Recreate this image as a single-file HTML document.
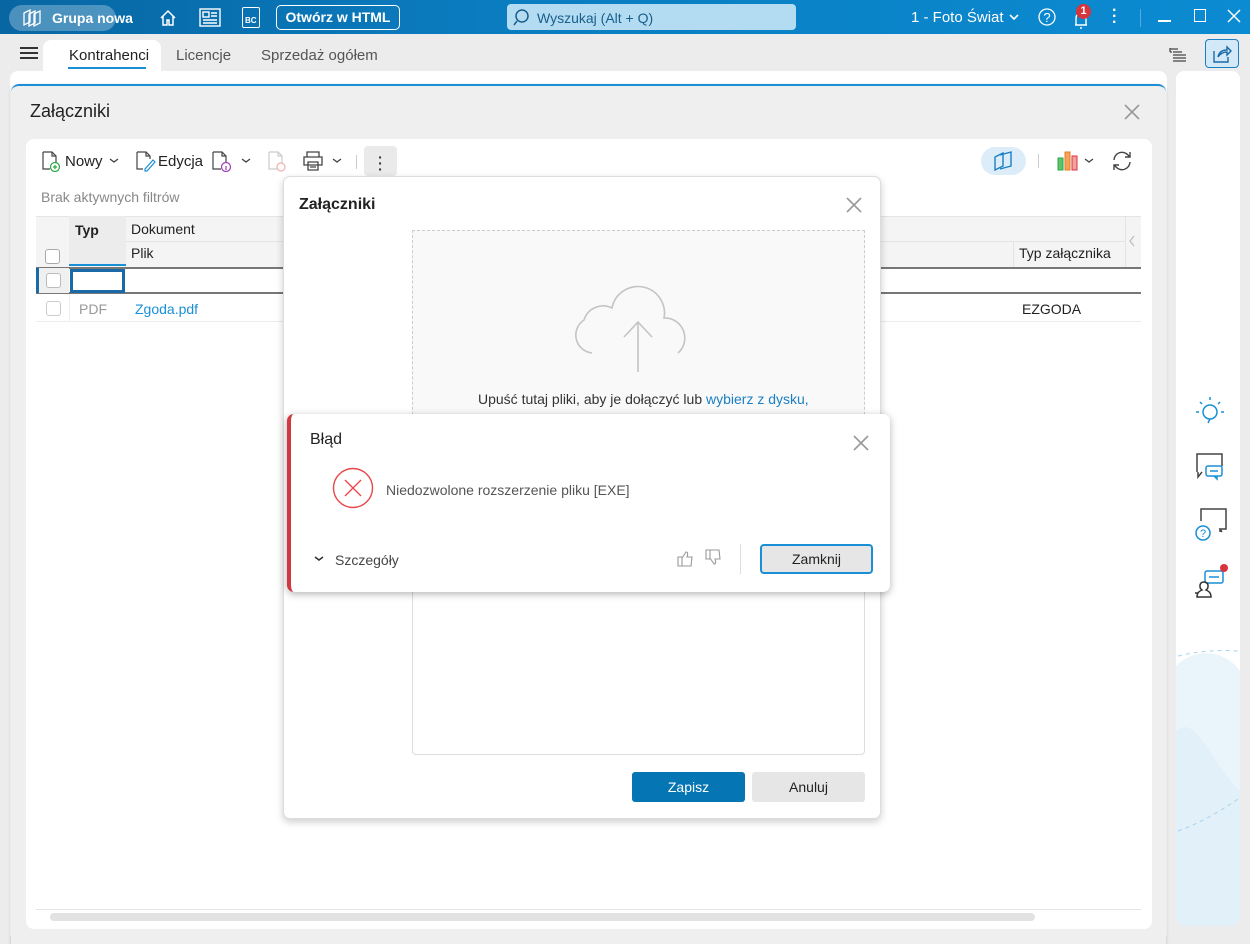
<!DOCTYPE html>
<html><head><meta charset="utf-8"><style>
*{box-sizing:border-box;margin:0;padding:0}
body{width:1250px;height:936px;overflow:hidden;background:#ececec;font-family:"Liberation Sans",sans-serif;position:relative;font-size:14px;color:#222}
.abs{position:absolute}
.top{left:0;top:0;width:1250px;height:34px;background:linear-gradient(90deg,#0866a3 0%,#0a7dc0 40%,#0b8bd2 100%)}
.t{position:absolute;white-space:nowrap}
</style></head><body>
<div class="abs" style="left:0;top:0;width:1250px;height:3px;background:#333"></div>
<div class="abs top"></div>
<div class="abs" style="left:9px;top:5px;width:107px;height:26px;border-radius:13px;background:rgba(255,255,255,.28)"></div>
<svg class="abs" style="left:20px;top:8px" width="24" height="20" viewBox="0 0 24 20" fill="none" stroke="#fff" stroke-width="1.3"><path d="M4 5l6-3v12l-6 3z M9 6l6-3v12l-6 3z M14 6l6-3v12l-6 3z"/></svg>
<div class="t" style="left:52px;top:10px;color:#fff;font-weight:bold;font-size:14px">Grupa nowa</div>
<svg class="abs" style="left:158px;top:8px" width="20" height="20" viewBox="0 0 20 20" fill="none" stroke="#fff" stroke-width="1.5"><path d="M3 10L10 3l7 7M5 8v9h4v-5h2v5h4V8"/></svg>
<svg class="abs" style="left:199px;top:8px" width="22" height="19" viewBox="0 0 22 19" fill="none" stroke="#fff" stroke-width="1.4"><rect x="1" y="1" width="20" height="17"/><rect x="4" y="4" width="6" height="5"/><path d="M12 5h6M12 8h6M4 12h14M4 15h14"/></svg>
<div class="abs" style="left:242px;top:7px;width:18px;height:21px;border:1.4px solid #fff;border-radius:2px;color:#fff;font-size:8px;font-weight:bold;padding:8px 0 0 2px">BC</div>
<div class="abs" style="left:276px;top:5px;width:124px;height:25px;border:1.5px solid #fff;border-radius:5px;color:#fff;font-weight:bold;font-size:14px;text-align:center;line-height:22px">Otwórz w HTML</div>
<div class="abs" style="left:507px;top:4px;width:289px;height:26px;border-radius:4px;background:#b3dcf2"></div>
<svg class="abs" style="left:512px;top:8px" width="20" height="20" viewBox="0 0 20 20" fill="none" stroke="#185f8c" stroke-width="1.5"><circle cx="10" cy="8" r="6"/><path d="M5 13l-3 4"/></svg>
<div class="t" style="left:537px;top:10px;color:#185f8c;font-size:14px">Wyszukaj (Alt + Q)</div>
<div class="t" style="left:911px;top:9px;color:#fff;font-size:15px">1 - Foto Świat</div>
<svg class="abs" style="left:1008px;top:13px" width="12" height="8"><path d="M2 2l4 4 4-4" stroke="#fff" stroke-width="1.6" fill="none"/></svg>
<svg class="abs" style="left:1037px;top:7px" width="20" height="20"><circle cx="10" cy="10" r="8" stroke="#fff" stroke-width="1.3" fill="none"/><text x="10" y="15" fill="#fff" font-size="13" text-anchor="middle" font-family="Liberation Sans">?</text></svg>
<svg class="abs" style="left:1071px;top:8px" width="20" height="22" fill="none" stroke="#fff" stroke-width="1.4"><path d="M4 17h12M5 17V10a5 5 0 0110 0v7M9 20h2"/></svg>
<div class="abs" style="left:1076px;top:4px;width:15px;height:15px;border-radius:50%;background:#d8343b;color:#fff;font-size:11px;font-weight:bold;text-align:center;line-height:15px">1</div>
<div class="t" style="left:1112px;top:8px;color:#fff;font-size:16px;font-weight:bold;line-height:6px">·<br>·<br>·</div>
<div class="abs" style="left:1140px;top:9px;width:1px;height:18px;background:rgba(255,255,255,.3)"></div>
<div class="abs" style="left:1158px;top:20px;width:13px;height:1.5px;background:#fff"></div>
<div class="abs" style="left:1194px;top:9px;width:12px;height:13px;border:1.5px solid #fff"></div>
<svg class="abs" style="left:1227px;top:9px" width="14" height="14"><path d="M1 1l12 12M13 1L1 13" stroke="#fff" stroke-width="1.5"/></svg>

<div class="abs" style="left:20px;top:47px;width:18px;height:2px;background:#333;box-shadow:0 5px #333,0 10px #333"></div>
<div class="abs" style="left:43px;top:40px;width:118px;height:32px;background:#fff;border-radius:8px 8px 0 0"></div>
<div class="t" style="left:69px;top:47px;font-size:15px;color:#222">Kontrahenci</div>
<div class="abs" style="left:68px;top:67px;width:78px;height:2px;background:#1a8fd6"></div>
<div class="t" style="left:176px;top:47px;font-size:15px;color:#555">Licencje</div>
<div class="t" style="left:261px;top:47px;font-size:15px;color:#555">Sprzedaż ogółem</div>
<svg class="abs" style="left:1168px;top:46px" width="20" height="18" fill="none" stroke="#444" stroke-width="1.2"><path d="M2 2v4M2 3h8M5 6h9M5 9h13M5 12h13M5 15h13M2 6h2"/></svg>
<div class="abs" style="left:1205px;top:39px;width:34px;height:29px;border:1.3px solid #1a7fc4;border-radius:4px;background:#d4e9f7"></div>
<svg class="abs" style="left:1211px;top:43px" width="22" height="22" fill="none" stroke="#1a6aa8" stroke-width="1.4"><path d="M3 8v11h14v-5M7 14c1-5 4-7 9-7V4l4 4-4 4V9c-4 0-7 2-9 5z"/></svg>

<div class="abs" style="left:10px;top:71px;width:1157px;height:870px;background:#fff;border-radius:8px"></div>
<div class="abs" style="left:11px;top:84px;width:1155px;height:860px;background:#efefef;border-top:2px solid #1a8fd6;border-radius:8px 8px 0 0;box-shadow:0 1px 3px rgba(0,0,0,.2)"></div>
<div class="t" style="left:30px;top:101px;font-size:18px;color:#222">Załączniki</div>
<svg class="abs" style="left:1124px;top:104px" width="16" height="16"><path d="M1 1l14 14M15 1L1 15" stroke="#999" stroke-width="1.6"/></svg>
<div class="abs" style="left:26px;top:139px;width:1126px;height:790px;background:#fff;border-radius:8px"></div>

<div class="abs" style="left:1176px;top:71px;width:64px;height:855px;background:#fff;border-radius:8px;overflow:hidden">
<svg width="64" height="855"><path d="M0 595 C20 575 50 580 64 600 L64 855 L0 855Z" fill="#eaf4fb"/><path d="M0 660 C20 640 40 700 64 720 L64 855 L0 855Z" fill="#e2f0f9"/><path d="M2 585 Q30 578 62 580" stroke="#a8d3ee" stroke-dasharray="4 4" fill="none"/><path d="M2 760 Q30 750 62 728" stroke="#a8d3ee" stroke-dasharray="4 4" fill="none"/></svg>
</div>
<svg class="abs" style="left:1193px;top:394px" width="34" height="34" fill="none" stroke="#1a8fd6" stroke-width="1.5"><circle cx="17" cy="18" r="7"/><path d="M17 25l-2 4M17 3v3M7 8l2 2M27 8l-2 2M3 18h3M28 18h3"/></svg>
<svg class="abs" style="left:1193px;top:450px" width="34" height="36" fill="none" stroke-width="1.5"><path d="M4 22V4h25v12M9 22l-4 5v-5" stroke="#444"/><rect x="13" y="16" width="16" height="10" rx="2" stroke="#1a8fd6" fill="#fff"/><path d="M17 21h8M24 26v3l-3-3" stroke="#1a8fd6"/></svg>
<svg class="abs" style="left:1193px;top:505px" width="34" height="36" fill="none" stroke-width="1.5"><path d="M8 16V4h25v20h-6l2 3M27 24v3" stroke="#444"/><circle cx="10" cy="28" r="7" stroke="#1a8fd6" fill="#fff"/><text x="10" y="32" font-size="11" fill="#1a8fd6" stroke="none" text-anchor="middle" font-family="Liberation Sans">?</text></svg>
<svg class="abs" style="left:1193px;top:563px" width="36" height="40" fill="none" stroke-width="1.5"><rect x="12" y="8" width="18" height="12" rx="2" stroke="#1a8fd6"/><path d="M16 14h10" stroke="#1a8fd6"/><path d="M4 34c0-5 3-6 5-7-3-2-3-8 2-8s5 6 2 8c2 1 5 2 5 7zM2 30h3" stroke="#333"/><circle cx="31" cy="5" r="4" fill="#d8343b" stroke="none"/></svg>

<svg class="abs" style="left:40px;top:150px" width="22" height="22" fill="none" stroke="#444" stroke-width="1.2"><path d="M3 2h9l4 4v7M3 2v17h7M12 2v4h4"/><circle cx="15" cy="17" r="4.5" stroke="#2aa84a"/><path d="M15 15v4M13 17h4" stroke="#2aa84a"/></svg>
<div class="t" style="left:65px;top:153px;font-size:15px">Nowy</div>
<svg class="abs" style="left:108px;top:157px" width="12" height="8"><path d="M2 2l4 3 4-3" stroke="#444" stroke-width="1.3" fill="none"/></svg>
<svg class="abs" style="left:134px;top:150px" width="22" height="22" fill="none" stroke="#444" stroke-width="1.2"><path d="M3 2h9l4 4v3M3 2v17h6M12 2v4h4"/><path d="M11 19l8-9 2 2-8 9h-2z" stroke="#1a8fd6"/></svg>
<div class="t" style="left:158px;top:153px;font-size:15px">Edycja</div>
<svg class="abs" style="left:210px;top:150px" width="24" height="22" fill="none" stroke="#444" stroke-width="1.2"><path d="M3 2h9l4 4v7M3 2v17h8M12 2v4h4"/><circle cx="16" cy="17" r="4.5" stroke="#9b3fb5"/><path d="M16 16v4" stroke="#9b3fb5"/></svg>
<svg class="abs" style="left:240px;top:157px" width="12" height="8"><path d="M2 2l4 3 4-3" stroke="#444" stroke-width="1.3" fill="none"/></svg>
<svg class="abs" style="left:266px;top:150px" width="24" height="22" fill="none" stroke="#ccc" stroke-width="1.2"><path d="M3 2h9l4 4v7M3 2v17h8M12 2v4h4"/><circle cx="15" cy="17" r="4" stroke="#f2b0b0"/></svg>
<svg class="abs" style="left:301px;top:150px" width="24" height="22" fill="none" stroke="#444" stroke-width="1.3"><path d="M6 7V2h12v5M3 7h18v8H3zM7 12h10v8H7zM9 15h6M9 17h6"/></svg>
<svg class="abs" style="left:331px;top:157px" width="12" height="8"><path d="M2 2l4 3 4-3" stroke="#444" stroke-width="1.3" fill="none"/></svg>
<div class="abs" style="left:356px;top:155px;width:1px;height:14px;background:#ccc"></div>
<div class="abs" style="left:364px;top:146px;width:33px;height:30px;background:#eaeaea;border-radius:4px;text-align:center;font-weight:bold;line-height:6px;padding-top:8px;color:#333">·<br>·<br>·</div>
<div class="abs" style="left:981px;top:147px;width:45px;height:28px;background:#dcedf9;border-radius:14px"></div>
<svg class="abs" style="left:992px;top:149px" width="24" height="24" fill="none" stroke="#1a7fc4" stroke-width="1.4"><path d="M3 8l8-4v13l-8 4zM8 6l11-3v14l-11 3"/></svg>
<div class="abs" style="left:1038px;top:154px;width:1px;height:14px;background:#ccc"></div>
<svg class="abs" style="left:1056px;top:150px" width="24" height="22"><rect x="2" y="8" width="5" height="12" fill="#5cc36b" stroke="#2aa84a"/><rect x="9" y="2" width="5" height="18" fill="#f5a35c" stroke="#e07d22"/><rect x="16" y="6" width="5" height="14" fill="#f3a0a0" stroke="#d8343b"/></svg>
<svg class="abs" style="left:1083px;top:157px" width="12" height="8"><path d="M2 2l4 3 4-3" stroke="#444" stroke-width="1.3" fill="none"/></svg>
<svg class="abs" style="left:1110px;top:149px" width="24" height="24" fill="none" stroke="#444" stroke-width="1.4"><path d="M4 11a8 8 0 0114-5l2 2M20 13a8 8 0 01-14 5l-2-2M20 3v5h-5M4 21v-5h5"/></svg>
<div class="t" style="left:41px;top:189px;font-size:14px;color:#888">Brak aktywnych filtrów</div>

<div class="abs" style="left:36px;top:216px;width:1105px;height:52px;background:#f4f4f4;border-top:1px solid #e4e4e4"></div>
<div class="abs" style="left:69px;top:216px;width:57px;height:50px;background:#ececec"></div>
<div class="abs" style="left:69px;top:264px;width:57px;height:2px;background:#1a8fd6"></div>
<div class="abs" style="left:126px;top:241px;width:999px;height:1px;background:#e4e4e4"></div>
<div class="abs" style="left:1125px;top:216px;width:1px;height:52px;background:#e4e4e4"></div>
<div class="abs" style="left:1013px;top:241px;width:1px;height:27px;background:#e4e4e4"></div>
<div class="t" style="left:75px;top:222px;font-weight:bold;font-size:14px">Typ</div>
<div class="t" style="left:131px;top:221px;font-size:14px">Dokument</div>
<div class="t" style="left:131px;top:245px;font-size:14px">Plik</div>
<div class="t" style="left:1019px;top:245px;font-size:14px">Typ załącznika</div>
<svg class="abs" style="left:1127px;top:234px" width="10" height="14"><path d="M7 2L3 7l4 5" stroke="#bbb" fill="none" stroke-width="1.2"/></svg>
<div class="abs" style="left:45px;top:249px;width:15px;height:15px;border:1px solid #aaa;border-radius:3px;background:#fff"></div>
<div class="abs" style="left:36px;top:267px;width:1105px;height:27px;border-top:2px solid #777;border-bottom:2px solid #777;background:#fff"></div>
<div class="abs" style="left:36px;top:268px;width:33px;height:25px;background:#f0f0f0;border-left:3px solid #1a6aa8"></div>
<div class="abs" style="left:46px;top:273px;width:15px;height:15px;border:1px solid #bbb;border-radius:3px;background:#fff"></div>
<div class="abs" style="left:70px;top:269px;width:55px;height:24px;border:3px solid #1a6aa8"></div>
<div class="abs" style="left:46px;top:301px;width:15px;height:15px;border:1px solid #ccc;border-radius:3px"></div>
<div class="t" style="left:79px;top:301px;color:#999;font-size:14px">PDF</div>
<div class="t" style="left:135px;top:301px;color:#1a8fd6;font-size:14px">Zgoda.pdf</div>
<div class="t" style="left:1022px;top:301px;font-size:14px">EZGODA</div>
<div class="abs" style="left:36px;top:321px;width:1105px;height:1px;background:#ececec"></div>
<div class="abs" style="left:69px;top:294px;width:1px;height:27px;background:#eee"></div>
<div class="abs" style="left:36px;top:909px;width:1105px;height:1px;background:#e4e4e4"></div>
<div class="abs" style="left:50px;top:913px;width:985px;height:8px;background:#e2e2e2;border-radius:4px"></div>

<div class="abs" style="left:283px;top:176px;width:598px;height:643px;background:#fff;border-radius:7px;border:1px solid #ddd;box-shadow:0 3px 8px rgba(0,0,0,.2)"></div>
<div class="t" style="left:299px;top:196px;font-weight:bold;font-size:16px">Załączniki</div>
<svg class="abs" style="left:846px;top:197px" width="16" height="16"><path d="M1 1l14 14M15 1L1 15" stroke="#999" stroke-width="1.6"/></svg>
<div class="abs" style="left:412px;top:230px;width:453px;height:200px;border:1px dashed #ccc;border-bottom:none;background:#f9f9f9"></div>
<svg class="abs" style="left:574px;top:280px" width="130" height="95" fill="none" stroke="#c4c4c4" stroke-width="1.6"><path d="M18 73 A18 18 0 0 1 10 40 A20 20 0 0 1 38 28 A26 26 0 0 1 90 38 A20 20 0 0 1 104 73"/><path d="M64 92V42M50 57l14-15 14 15"/></svg>
<div class="t" style="left:478px;top:391px;font-size:14px;color:#333">Upuść tutaj pliki, aby je dołączyć lub <span style="color:#1a7fc4">wybierz z dysku,</span></div>
<div class="abs" style="left:412px;top:590px;width:453px;height:165px;border:1px solid #ddd;border-top:none;border-radius:0 0 4px 4px"></div>
<div class="abs" style="left:632px;top:772px;width:113px;height:30px;background:#0576b3;border-radius:3px;color:#fff;font-size:14px;text-align:center;line-height:30px">Zapisz</div>
<div class="abs" style="left:752px;top:772px;width:113px;height:30px;background:#e6e6e6;border-radius:3px;color:#222;font-size:14px;text-align:center;line-height:30px">Anuluj</div>

<div class="abs" style="left:287px;top:414px;width:603px;height:178px;background:#fff;border-radius:7px;border-left:4px solid #d0393f;box-shadow:0 2px 8px rgba(0,0,0,.3)"></div>
<div class="t" style="left:310px;top:431px;font-size:16px">Błąd</div>
<svg class="abs" style="left:853px;top:435px" width="16" height="16"><path d="M1 1l14 14M15 1L1 15" stroke="#999" stroke-width="1.6"/></svg>
<svg class="abs" style="left:332px;top:467px" width="42" height="42" fill="none" stroke="#e8474c" stroke-width="1.4"><circle cx="21" cy="21" r="19.5"/><path d="M13 13l16 16M29 13L13 29"/></svg>
<div class="t" style="left:386px;top:482px;font-size:14px;color:#555">Niedozwolone rozszerzenie pliku [EXE]</div>
<svg class="abs" style="left:313px;top:555px" width="12" height="8"><path d="M2 2l4 3 4-3" stroke="#333" stroke-width="1.5" fill="none"/></svg>
<div class="t" style="left:335px;top:552px;font-size:14px;color:#444">Szczegóły</div>
<svg class="abs" style="left:676px;top:549px" width="18" height="18" fill="none" stroke="#999" stroke-width="1.1"><path d="M2 8h4v9H2zM6 9l4-6c2 0 2 2 1 5h5l-1 9H6"/></svg>
<svg class="abs" style="left:704px;top:549px" width="18" height="18" fill="none" stroke="#999" stroke-width="1.1"><path d="M2 1h4v9H2zM6 9l4 6c2 0 2-2 1-5h5l-1-9H6"/></svg>
<div class="abs" style="left:740px;top:544px;width:1px;height:30px;background:#ddd"></div>
<div class="abs" style="left:760px;top:544px;width:113px;height:30px;border:2px solid #1a8fd6;border-radius:4px;background:#e6e6e6;text-align:center;line-height:26px;font-size:14px">Zamknij</div>
</body></html>
